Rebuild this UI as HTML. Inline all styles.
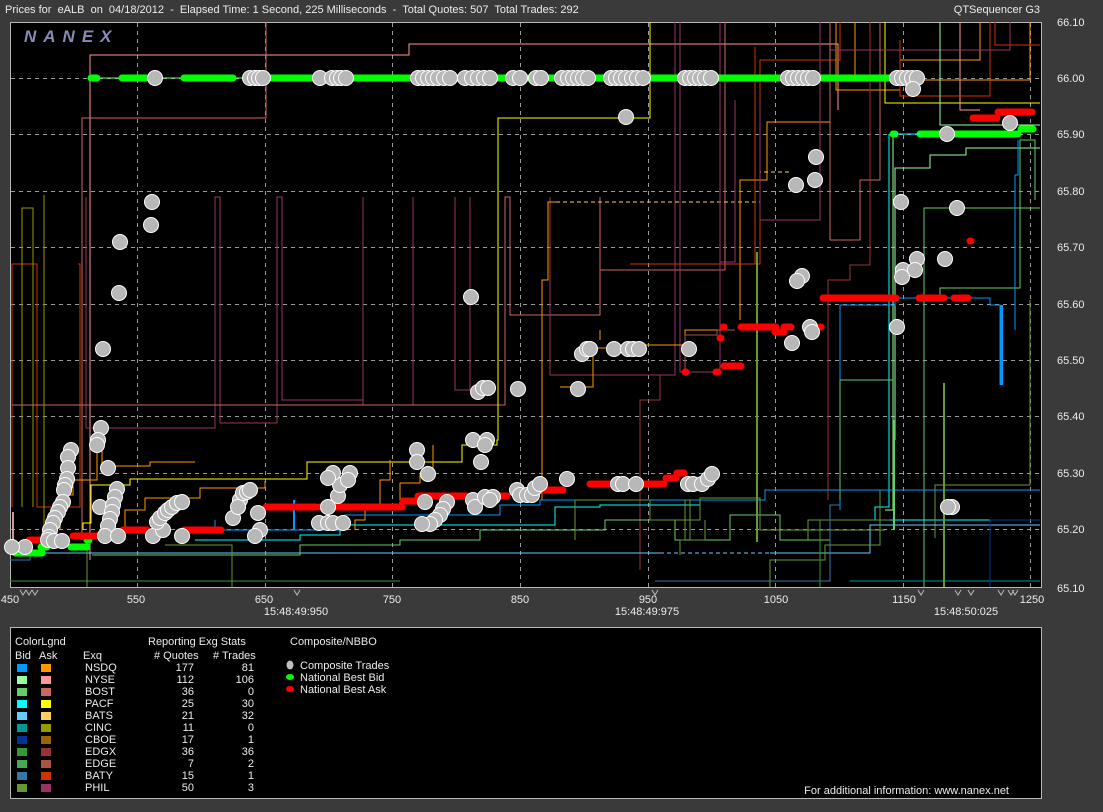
<!DOCTYPE html>
<html><head><meta charset="utf-8"><style>
html,body{margin:0;padding:0;background:#3a3a3a;}
body{width:1103px;height:807px;overflow:hidden;font-family:"Liberation Sans",sans-serif;}
svg text{font-family:"Liberation Sans",sans-serif;font-size:11px;fill:#ececec;white-space:pre;}
</style></head><body>
<svg width="1103" height="807" viewBox="0 0 1103 807" xmlns="http://www.w3.org/2000/svg" xml:space="preserve">
<rect x="0" y="0" width="1103" height="807" fill="#3a3a3a"/>
<text x="5" y="13">Prices for  eALB  on  04/18/2012  -  Elapsed Time: 1 Second, 225 Milliseconds  -  Total Quotes: 507  Total Trades: 292</text>
<text x="1040" y="13" text-anchor="end">QTSequencer G3</text>
<rect x="10.5" y="22.5" width="1031" height="565" fill="#000" stroke="#b8b8b8" stroke-width="1"/>
<text x="24" y="42" style="font-size:17px;font-weight:bold;font-style:italic;fill:#8a8ab8;letter-spacing:7px">NANEX</text>
<g stroke="#9a9a9a" stroke-dasharray="4,4" stroke-width="1" shape-rendering="crispEdges">
<line x1="11" y1="78.5" x2="1041" y2="78.5"/><line x1="11" y1="134.5" x2="1041" y2="134.5"/><line x1="11" y1="191.5" x2="1041" y2="191.5"/><line x1="11" y1="247.5" x2="1041" y2="247.5"/><line x1="11" y1="304.5" x2="1041" y2="304.5"/><line x1="11" y1="360.5" x2="1041" y2="360.5"/><line x1="11" y1="416.5" x2="1041" y2="416.5"/><line x1="11" y1="473.5" x2="1041" y2="473.5"/><line x1="11" y1="529.5" x2="1041" y2="529.5"/>
<line x1="137.5" y1="23" x2="137.5" y2="587"/><line x1="265.5" y1="23" x2="265.5" y2="587"/><line x1="392.5" y1="23" x2="392.5" y2="587"/><line x1="520.5" y1="23" x2="520.5" y2="587"/><line x1="648.5" y1="23" x2="648.5" y2="587"/><line x1="775.5" y1="23" x2="775.5" y2="587"/><line x1="903.5" y1="23" x2="903.5" y2="587"/><line x1="1030.5" y1="23" x2="1030.5" y2="587"/>
</g>
<g fill="none" stroke-width="1" shape-rendering="crispEdges">
<polyline stroke="#cc3300" points="12,507 12,264 37,264 37,507 80,507 80,264 78,264"/>
<polyline stroke="#999900" points="22,507 22,208 33,208 33,507"/>
<polyline stroke="#ff9999" points="90,560 90,55 409,55 409,44 838,44 838,110"/>
<polyline stroke="#cc6666" points="266,22 266,118 82,118 82,540"/>
<polyline stroke="#993366" points="86,197 86,428 215,428 215,197 220,197 220,423 277,423 277,197 282,197 282,400 363,400"/>
<polyline stroke="#993366" points="363,197 363,405 413,405 413,197"/>
<polyline stroke="#993366" points="455,197 455,390 470,390 470,197"/>
<polyline stroke="#cc6666" points="12,405 505,405 505,197 510,197 510,315 600,315 600,197"/>
<polyline stroke="#cc6666" points="600,270 600,270 650,270 725,270 725,22"/>
<polyline stroke="#993366" points="550,197 550,375 675,375 675,22"/>
<polyline stroke="#993366" points="680,22 680,372 720,372 720,22"/>
<polyline stroke="#cc3300" points="656,264 760,264 760,60 840,60 840,22"/>
<polyline stroke="#ffcc66" stroke-dasharray="4,3" points="556,202 760,202 760,172 790,172"/>
<polyline stroke="#ff9900" points="542,500 542,280 548,280 548,202 556,202"/>
<polyline stroke="#ffff00" points="83,530 83,523 91,523 91,485 130,485 130,479 307,479 307,462 462,462 462,445 497,445 497,440 498,440 498,118 650,118 650,22"/>
<polyline stroke="#ff9900" points="60,530 60,495 73,495 73,480 97,480 97,440 102,440 102,466 150,466 150,462 195,462"/>
<polyline stroke="#ff9900" points="125,540 125,510 145,510 145,498 200,498 200,488 265,488 265,481"/>
<polyline stroke="#ff9900" points="355,530 355,520 365,520 365,510 380,510 380,480 390,480 390,460"/>
<polyline stroke="#ff9900" points="400,505 400,483 420,483 420,475 433,475 433,445"/>
<polyline stroke="#ff9900" points="560,387 593,387 593,348 610,348 615,345 650,345 685,345 685,330 720,330"/>
<polyline stroke="#ff9900" points="740,320 740,180 767,180 767,122 830,122 830,22"/>
<polyline stroke="#ff9900" points="836,22 836,90 900,90 900,60 980,60 980,22"/>
<polyline stroke="#ff9900" points="855,22 855,80 1030,80 1030,22"/>
<polyline stroke="#ffff00" points="885,22 885,103 1040,103"/>
<polyline stroke="#ff9999" points="960,22 960,110 980,110"/>
<polyline stroke="#cc3300" points="995,22 995,45 1040,45"/>
<polyline stroke="#cc3300" points="900,40 900,96 990,96 990,22"/>
<polyline stroke="#993366" points="830,22 830,50 1010,50 1010,22"/>
<polyline stroke="#cc6666" points="830,22 830,240 860,240 860,180 880,180 880,22"/>
<polyline stroke="#993366" points="720,100 720,262 735,262 735,100"/>
<polyline stroke="#993366" points="760,100 760,220 820,220 820,22"/>
<polyline stroke="#cc3300" points="630,264 755,264 755,47"/>
<polyline stroke="#993333" points="828,500 828,280 850,280 850,265 870,265 870,22"/>
<polyline stroke="#993333" points="640,570 640,400 660,400 660,375"/>
<polyline stroke="#aa5544" points="685,372 685,335 717,335 717,330 735,330"/>
<polyline stroke="#ff9900" points="600,330 600,340"/>
<polyline stroke="#99ff99" points="893,134 893,510 885,510"/>
<polyline stroke="#99ff99" points="940,22 940,125 1040,125"/>
<polyline stroke="#99ff99" points="895,440 895,168 930,168 930,155 966,155 966,148 1040,148"/>
<polyline stroke="#66cc66" points="924,587 924,208 1040,208"/>
<polyline stroke="#66cc66" points="940,300 940,288 1020,288 1020,140 1035,140 1035,200"/>
<polyline stroke="#00ffff" points="889,134 889,507 875,507 875,520 1040,520"/>
<polyline stroke="#0099ff" points="840,510 840,305 895,305 895,298 990,298 990,305 1000,305 1000,385"/>
<polyline stroke="#0099ff" points="1015,330 1015,175 1018,175 1018,140"/>
<polyline stroke="#66cc66" points="840,500 840,380 893,380"/>
<polyline stroke="#669933" points="1030,300 1030,485 935,485 935,538"/>
<polyline stroke="#669933" points="808,540 808,520 890,520"/>
<polyline stroke="#339933" points="880,525 880,490 1040,490"/>
<polyline stroke="#3377aa" points="10,560 30,560 30,552"/>
<polyline stroke="#66ccff" points="11,553 660,553"/>
<polyline stroke="#66ccff" stroke-dasharray="4,3" points="660,553 770,553"/>
<polyline stroke="#66ccff" points="770,553 870,553 870,525 1040,525"/>
<polyline stroke="#0099ff" points="215,520 215,530 345,530 345,515 425,515 430,515 500,515 500,505 540,505 540,500 765,500 765,490 1040,490"/>
<polyline stroke="#00ffff" points="195,540 300,540 300,535 340,535 340,525 425,525 490,525 555,525 555,507 600,507 600,505 700,505"/>
<polyline stroke="#66cc66" points="92,555 300,555 300,545 400,545 400,540 480,540 480,530 605,530 605,520 675,520 675,540 700,540 730,540 730,515 780,515 780,540 830,540"/>
<polyline stroke="#669933" points="165,545 232,545 232,587"/>
<polyline stroke="#339933" points="10,581 400,581"/>
<polyline stroke="#669933" points="87,540 87,587"/>
<polyline stroke="#669933" points="575,540 575,500 650,500 650,520 700,520 700,498 760,498 760,530 885,530"/>
<polyline stroke="#669933" points="680,555 680,540 685,540 685,500 690,500 690,540 705,540 705,520"/>
<polyline stroke="#669933" points="770,587 770,560 825,560 825,545 880,545 880,490"/>
<polyline stroke="#339933" points="820,520 820,587"/>
<polyline stroke="#3377aa" points="655,581 830,581 830,505 840,505"/>
<polyline stroke="#009999" points="850,581 1040,581"/>
<polyline stroke="#003399" points="990,587 990,520 1040,520"/>
<polyline stroke="#999900" points="44,530 44,195"/>
</g>
<g shape-rendering="crispEdges">
<rect x="756" y="252" width="2" height="290" fill="#669933"/>
<rect x="943" y="383" width="2" height="204" fill="#669933"/>
<rect x="893" y="420" width="2" height="110" fill="#66cc66"/>
<rect x="1000" y="305" width="3" height="80" fill="#0099ff"/>
<rect x="293" y="500" width="2" height="30" fill="#0099ff"/>
<rect x="12" y="512" width="2" height="40" fill="#cc9999"/>
</g>
<g stroke-linecap="round" fill="none">
<line x1="90" y1="78" x2="900" y2="78" stroke="#66ff66" stroke-width="1"/>
<g stroke="#00ff00" stroke-width="7">
<line x1="91" y1="78" x2="97" y2="78"/><line x1="122" y1="78" x2="146" y2="78"/><line x1="184" y1="78" x2="233" y2="78"/><line x1="265" y1="78" x2="895" y2="78"/>
<line x1="893" y1="134" x2="895" y2="134"/><line x1="920" y1="134" x2="1018" y2="134"/><line x1="1021" y1="129" x2="1033" y2="129"/>
<line x1="41" y1="547" x2="47" y2="547"/><line x1="15" y1="553" x2="42" y2="553"/><line x1="71" y1="547" x2="87" y2="547"/><line x1="87" y1="540" x2="89" y2="540"/>
</g>
<line x1="893" y1="134" x2="920" y2="134" stroke="#00ffff" stroke-width="1"/>
<g stroke="#ff0000" stroke-width="7">
<line x1="29" y1="540" x2="42" y2="540"/><line x1="73" y1="536" x2="99" y2="536"/><line x1="123" y1="530" x2="147" y2="530"/><line x1="184" y1="530" x2="221" y2="530"/>
<line x1="266" y1="507" x2="316" y2="507"/><line x1="320" y1="507" x2="402" y2="507"/><line x1="403" y1="501" x2="416" y2="501"/><line x1="418" y1="496" x2="467" y2="496"/><line x1="500" y1="496" x2="507" y2="496"/>
<line x1="540" y1="490" x2="563" y2="490"/><line x1="590" y1="484" x2="664" y2="484"/><line x1="666" y1="478" x2="676" y2="478"/><line x1="677" y1="473" x2="684" y2="473"/>
<line x1="685" y1="372" x2="686" y2="372"/><line x1="716" y1="372" x2="718" y2="372"/><line x1="724" y1="366" x2="741" y2="366"/><line x1="720" y1="338" x2="721" y2="338"/><line x1="723" y1="327" x2="724" y2="327"/>
<line x1="741" y1="327" x2="776" y2="327"/><line x1="775" y1="332" x2="784" y2="332"/><line x1="784" y1="327" x2="791" y2="327"/><line x1="820" y1="327" x2="821" y2="327"/>
<line x1="823" y1="298" x2="896" y2="298"/><line x1="919" y1="298" x2="944" y2="298"/><line x1="954" y1="298" x2="968" y2="298"/><line x1="970" y1="241" x2="971" y2="241"/>
<line x1="973" y1="118" x2="997" y2="118"/><line x1="998" y1="112" x2="1032" y2="112"/>
</g>
</g>
<g fill="#b8b8b8" stroke="#fff" stroke-width="1">
<circle cx="155" cy="78" r="7.5"/><circle cx="250" cy="78" r="7.5"/><circle cx="255" cy="78" r="7.5"/><circle cx="259" cy="78" r="7.5"/><circle cx="263" cy="78" r="7.5"/>
<circle cx="320" cy="78" r="7.5"/><circle cx="332" cy="78" r="7.5"/><circle cx="337" cy="78" r="7.5"/><circle cx="341" cy="78" r="7.5"/><circle cx="346" cy="78" r="7.5"/>
<circle cx="418" cy="78" r="7.5"/><circle cx="423" cy="78" r="7.5"/><circle cx="428" cy="78" r="7.5"/><circle cx="433" cy="78" r="7.5"/><circle cx="438" cy="78" r="7.5"/><circle cx="444" cy="78" r="7.5"/><circle cx="450" cy="78" r="7.5"/>
<circle cx="465" cy="78" r="7.5"/><circle cx="472" cy="78" r="7.5"/><circle cx="478" cy="78" r="7.5"/><circle cx="484" cy="78" r="7.5"/><circle cx="490" cy="78" r="7.5"/>
<circle cx="513" cy="78" r="7.5"/><circle cx="520" cy="78" r="7.5"/><circle cx="536" cy="78" r="7.5"/><circle cx="541" cy="78" r="7.5"/>
<circle cx="562" cy="78" r="7.5"/><circle cx="568" cy="78" r="7.5"/><circle cx="573" cy="78" r="7.5"/><circle cx="578" cy="78" r="7.5"/><circle cx="583" cy="78" r="7.5"/><circle cx="588" cy="78" r="7.5"/>
<circle cx="611" cy="78" r="7.5"/><circle cx="616" cy="78" r="7.5"/><circle cx="621" cy="78" r="7.5"/><circle cx="626" cy="78" r="7.5"/><circle cx="632" cy="78" r="7.5"/><circle cx="637" cy="78" r="7.5"/><circle cx="643" cy="78" r="7.5"/>
<circle cx="685" cy="78" r="7.5"/><circle cx="690" cy="78" r="7.5"/><circle cx="695" cy="78" r="7.5"/><circle cx="700" cy="78" r="7.5"/><circle cx="705" cy="78" r="7.5"/><circle cx="711" cy="78" r="7.5"/>
<circle cx="788" cy="78" r="7.5"/><circle cx="793" cy="78" r="7.5"/><circle cx="798" cy="78" r="7.5"/><circle cx="803" cy="78" r="7.5"/><circle cx="808" cy="78" r="7.5"/><circle cx="813" cy="78" r="7.5"/>
<circle cx="897" cy="78" r="7.5"/><circle cx="902" cy="78" r="7.5"/><circle cx="907" cy="78" r="7.5"/><circle cx="912" cy="78" r="7.5"/><circle cx="917" cy="78" r="7.5"/><circle cx="913" cy="89" r="7.5"/>
<circle cx="626" cy="117" r="7.5"/><circle cx="1010" cy="123" r="7.5"/><circle cx="947" cy="134" r="7.5"/>
<circle cx="816" cy="157" r="7.5"/><circle cx="815" cy="180" r="7.5"/><circle cx="796" cy="185" r="7.5"/><circle cx="901" cy="202" r="7.5"/><circle cx="957" cy="208" r="7.5"/>
<circle cx="917" cy="259" r="7.5"/><circle cx="945" cy="259" r="7.5"/><circle cx="903" cy="270" r="7.5"/><circle cx="915" cy="270" r="7.5"/><circle cx="902" cy="277" r="7.5"/>
<circle cx="802" cy="276" r="7.5"/><circle cx="797" cy="281" r="7.5"/><circle cx="810" cy="327" r="7.5"/><circle cx="812" cy="332" r="7.5"/><circle cx="792" cy="343" r="7.5"/><circle cx="897" cy="327" r="7.5"/>
<circle cx="952" cy="507" r="7.5"/><circle cx="948" cy="507" r="7.5"/>
<circle cx="152" cy="202" r="7.5"/><circle cx="151" cy="225" r="7.5"/><circle cx="120" cy="242" r="7.5"/><circle cx="119" cy="293" r="7.5"/><circle cx="103" cy="349" r="7.5"/><circle cx="471" cy="297" r="7.5"/>
<circle cx="101" cy="428" r="7.5"/><circle cx="98" cy="440" r="7.5"/><circle cx="97" cy="445" r="7.5"/><circle cx="108" cy="468" r="7.5"/>
<circle cx="71" cy="450" r="7.5"/><circle cx="68" cy="457" r="7.5"/><circle cx="68" cy="468" r="7.5"/><circle cx="67" cy="479" r="7.5"/><circle cx="65" cy="485" r="7.5"/><circle cx="64" cy="490" r="7.5"/><circle cx="63" cy="502" r="7.5"/><circle cx="60" cy="507" r="7.5"/><circle cx="58" cy="512" r="7.5"/><circle cx="55" cy="518" r="7.5"/><circle cx="53" cy="523" r="7.5"/><circle cx="50" cy="530" r="7.5"/><circle cx="49" cy="537" r="7.5"/><circle cx="48" cy="540" r="7.5"/><circle cx="54" cy="541" r="7.5"/><circle cx="62" cy="541" r="7.5"/>
<circle cx="25" cy="547" r="7.5"/><circle cx="12" cy="547" r="7.5"/>
<circle cx="100" cy="507" r="7.5"/><circle cx="117" cy="489" r="7.5"/><circle cx="115" cy="497" r="7.5"/><circle cx="113" cy="505" r="7.5"/><circle cx="112" cy="512" r="7.5"/><circle cx="110" cy="519" r="7.5"/><circle cx="108" cy="526" r="7.5"/><circle cx="105" cy="536" r="7.5"/><circle cx="118" cy="536" r="7.5"/>
<circle cx="153" cy="536" r="7.5"/><circle cx="163" cy="530" r="7.5"/><circle cx="157" cy="522" r="7.5"/><circle cx="160" cy="518" r="7.5"/><circle cx="165" cy="513" r="7.5"/><circle cx="168" cy="510" r="7.5"/><circle cx="172" cy="507" r="7.5"/><circle cx="177" cy="503" r="7.5"/><circle cx="182" cy="502" r="7.5"/><circle cx="182" cy="536" r="7.5"/>
<circle cx="233" cy="518" r="7.5"/><circle cx="240" cy="500" r="7.5"/><circle cx="238" cy="507" r="7.5"/><circle cx="243" cy="493" r="7.5"/><circle cx="247" cy="492" r="7.5"/><circle cx="250" cy="490" r="7.5"/><circle cx="258" cy="513" r="7.5"/><circle cx="260" cy="530" r="7.5"/><circle cx="255" cy="536" r="7.5"/>
<circle cx="328" cy="507" r="7.5"/><circle cx="338" cy="496" r="7.5"/><circle cx="340" cy="485" r="7.5"/><circle cx="333" cy="473" r="7.5"/><circle cx="328" cy="478" r="7.5"/><circle cx="350" cy="473" r="7.5"/><circle cx="348" cy="480" r="7.5"/>
<circle cx="319" cy="523" r="7.5"/><circle cx="328" cy="523" r="7.5"/><circle cx="333" cy="523" r="7.5"/><circle cx="343" cy="523" r="7.5"/>
<circle cx="417" cy="450" r="7.5"/><circle cx="417" cy="462" r="7.5"/><circle cx="428" cy="474" r="7.5"/><circle cx="473" cy="440" r="7.5"/><circle cx="487" cy="440" r="7.5"/><circle cx="485" cy="445" r="7.5"/><circle cx="481" cy="462" r="7.5"/>
<circle cx="478" cy="392" r="7.5"/><circle cx="483" cy="388" r="7.5"/><circle cx="488" cy="388" r="7.5"/><circle cx="518" cy="389" r="7.5"/><circle cx="578" cy="389" r="7.5"/>
<circle cx="582" cy="354" r="7.5"/><circle cx="587" cy="349" r="7.5"/><circle cx="590" cy="349" r="7.5"/><circle cx="614" cy="349" r="7.5"/><circle cx="628" cy="349" r="7.5"/><circle cx="633" cy="349" r="7.5"/><circle cx="639" cy="349" r="7.5"/><circle cx="689" cy="349" r="7.5"/>
<circle cx="425" cy="502" r="7.5"/><circle cx="447" cy="502" r="7.5"/><circle cx="443" cy="509" r="7.5"/><circle cx="440" cy="515" r="7.5"/><circle cx="435" cy="520" r="7.5"/><circle cx="430" cy="524" r="7.5"/><circle cx="422" cy="524" r="7.5"/>
<circle cx="473" cy="500" r="7.5"/><circle cx="475" cy="507" r="7.5"/><circle cx="485" cy="497" r="7.5"/><circle cx="493" cy="497" r="7.5"/><circle cx="490" cy="500" r="7.5"/>
<circle cx="517" cy="490" r="7.5"/><circle cx="520" cy="495" r="7.5"/><circle cx="527" cy="495" r="7.5"/><circle cx="532" cy="495" r="7.5"/><circle cx="535" cy="488" r="7.5"/><circle cx="540" cy="484" r="7.5"/><circle cx="567" cy="479" r="7.5"/>
<circle cx="618" cy="484" r="7.5"/><circle cx="623" cy="484" r="7.5"/><circle cx="636" cy="484" r="7.5"/>
<circle cx="688" cy="484" r="7.5"/><circle cx="693" cy="484" r="7.5"/><circle cx="702" cy="484" r="7.5"/><circle cx="708" cy="479" r="7.5"/><circle cx="712" cy="474" r="7.5"/>
</g>
<g fill="none" stroke="#bbb" stroke-width="1">
<path d="M20,590 l3,5 l3,-5 M26,590 l3,5 l3,-5 M32,590 l3,5 l3,-5 M294,590 l3,5 l3,-5 M652,590 l3,5 l3,-5 M918,590 l3,5 l3,-5 M955,590 l3,5 l3,-5 M968,590 l3,5 l3,-5 M998,590 l3,5 l3,-5 M1008,590 l3,5 l3,-5 M1012,590 l3,5 l3,-5"/>
</g>
<g>
<text x="1057" y="26">66.10</text><text x="1057" y="82">66.00</text><text x="1057" y="138">65.90</text><text x="1057" y="195">65.80</text><text x="1057" y="251">65.70</text><text x="1057" y="308">65.60</text><text x="1057" y="364">65.50</text><text x="1057" y="420">65.40</text><text x="1057" y="477">65.30</text><text x="1057" y="533">65.20</text><text x="1057" y="592">65.10</text>
</g>
<g text-anchor="middle" style="font-size:10.5px">
<text x="10" y="603">450</text><text x="136" y="603">550</text><text x="264" y="603">650</text><text x="392" y="603">750</text><text x="520" y="603">850</text><text x="648" y="603">950</text><text x="776" y="603">1050</text><text x="904" y="603">1150</text><text x="1032" y="603">1250</text>
<text x="296" y="615">15:48:49:950</text><text x="647" y="615">15:48:49:975</text><text x="966" y="615">15:48:50:025</text>
</g>
<rect x="10.5" y="627.5" width="1031" height="171" fill="#000" stroke="#b8b8b8"/>
<text x="15" y="645">ColorLgnd</text><text x="148" y="645">Reporting Exg Stats</text><text x="290" y="645">Composite/NBBO</text>
<text x="15" y="659">Bid</text><text x="39" y="659">Ask</text><text x="83" y="659">Exq</text><text x="154" y="659"># Quotes</text><text x="213" y="659"># Trades</text>
<g shape-rendering="crispEdges">
<rect x="17" y="664" width="10" height="8" fill="#0099ff"/><rect x="41" y="664" width="10" height="8" fill="#ff9900"/>
<rect x="17" y="676" width="10" height="8" fill="#99ff99"/><rect x="41" y="676" width="10" height="8" fill="#ff9999"/>
<rect x="17" y="688" width="10" height="8" fill="#66cc66"/><rect x="41" y="688" width="10" height="8" fill="#cc6666"/>
<rect x="17" y="700" width="10" height="8" fill="#00ffff"/><rect x="41" y="700" width="10" height="8" fill="#ffff00"/>
<rect x="17" y="712" width="10" height="8" fill="#66ccff"/><rect x="41" y="712" width="10" height="8" fill="#ffcc66"/>
<rect x="17" y="724" width="10" height="8" fill="#009999"/><rect x="41" y="724" width="10" height="8" fill="#999900"/>
<rect x="17" y="736" width="10" height="8" fill="#003399"/><rect x="41" y="736" width="10" height="8" fill="#996600"/>
<rect x="17" y="748" width="10" height="8" fill="#339933"/><rect x="41" y="748" width="10" height="8" fill="#993333"/>
<rect x="17" y="760" width="10" height="8" fill="#44aa55"/><rect x="41" y="760" width="10" height="8" fill="#aa5544"/>
<rect x="17" y="772" width="10" height="8" fill="#3377aa"/><rect x="41" y="772" width="10" height="8" fill="#cc3300"/>
<rect x="17" y="784" width="10" height="8" fill="#669933"/><rect x="41" y="784" width="10" height="8" fill="#993366"/>
</g>
<g>
<text x="85" y="671">NSDQ</text><text x="85" y="683">NYSE</text><text x="85" y="695">BOST</text><text x="85" y="707">PACF</text><text x="85" y="719">BATS</text><text x="85" y="731">CINC</text><text x="85" y="743">CBOE</text><text x="85" y="755">EDGX</text><text x="85" y="767">EDGE</text><text x="85" y="779">BATY</text><text x="85" y="791">PHIL</text>
</g>
<g text-anchor="end">
<text x="194" y="671">177</text><text x="194" y="683">112</text><text x="194" y="695">36</text><text x="194" y="707">25</text><text x="194" y="719">21</text><text x="194" y="731">11</text><text x="194" y="743">17</text><text x="194" y="755">36</text><text x="194" y="767">7</text><text x="194" y="779">15</text><text x="194" y="791">50</text>
<text x="254" y="671">81</text><text x="254" y="683">106</text><text x="254" y="695">0</text><text x="254" y="707">30</text><text x="254" y="719">32</text><text x="254" y="731">0</text><text x="254" y="743">1</text><text x="254" y="755">36</text><text x="254" y="767">2</text><text x="254" y="779">1</text><text x="254" y="791">3</text>
</g>
<ellipse cx="290" cy="665" rx="3.5" ry="4.5" fill="#c0c0c0"/><ellipse cx="290" cy="677" rx="4" ry="3" fill="#00ff00"/><ellipse cx="290" cy="689" rx="4" ry="3" fill="#ff0000"/>
<text x="300" y="669">Composite Trades</text><text x="300" y="681">National Best Bid</text><text x="300" y="693">National Best Ask</text>
<text x="1009" y="794" text-anchor="end">For additional information: www.nanex.net</text>
</svg>
</body></html>
